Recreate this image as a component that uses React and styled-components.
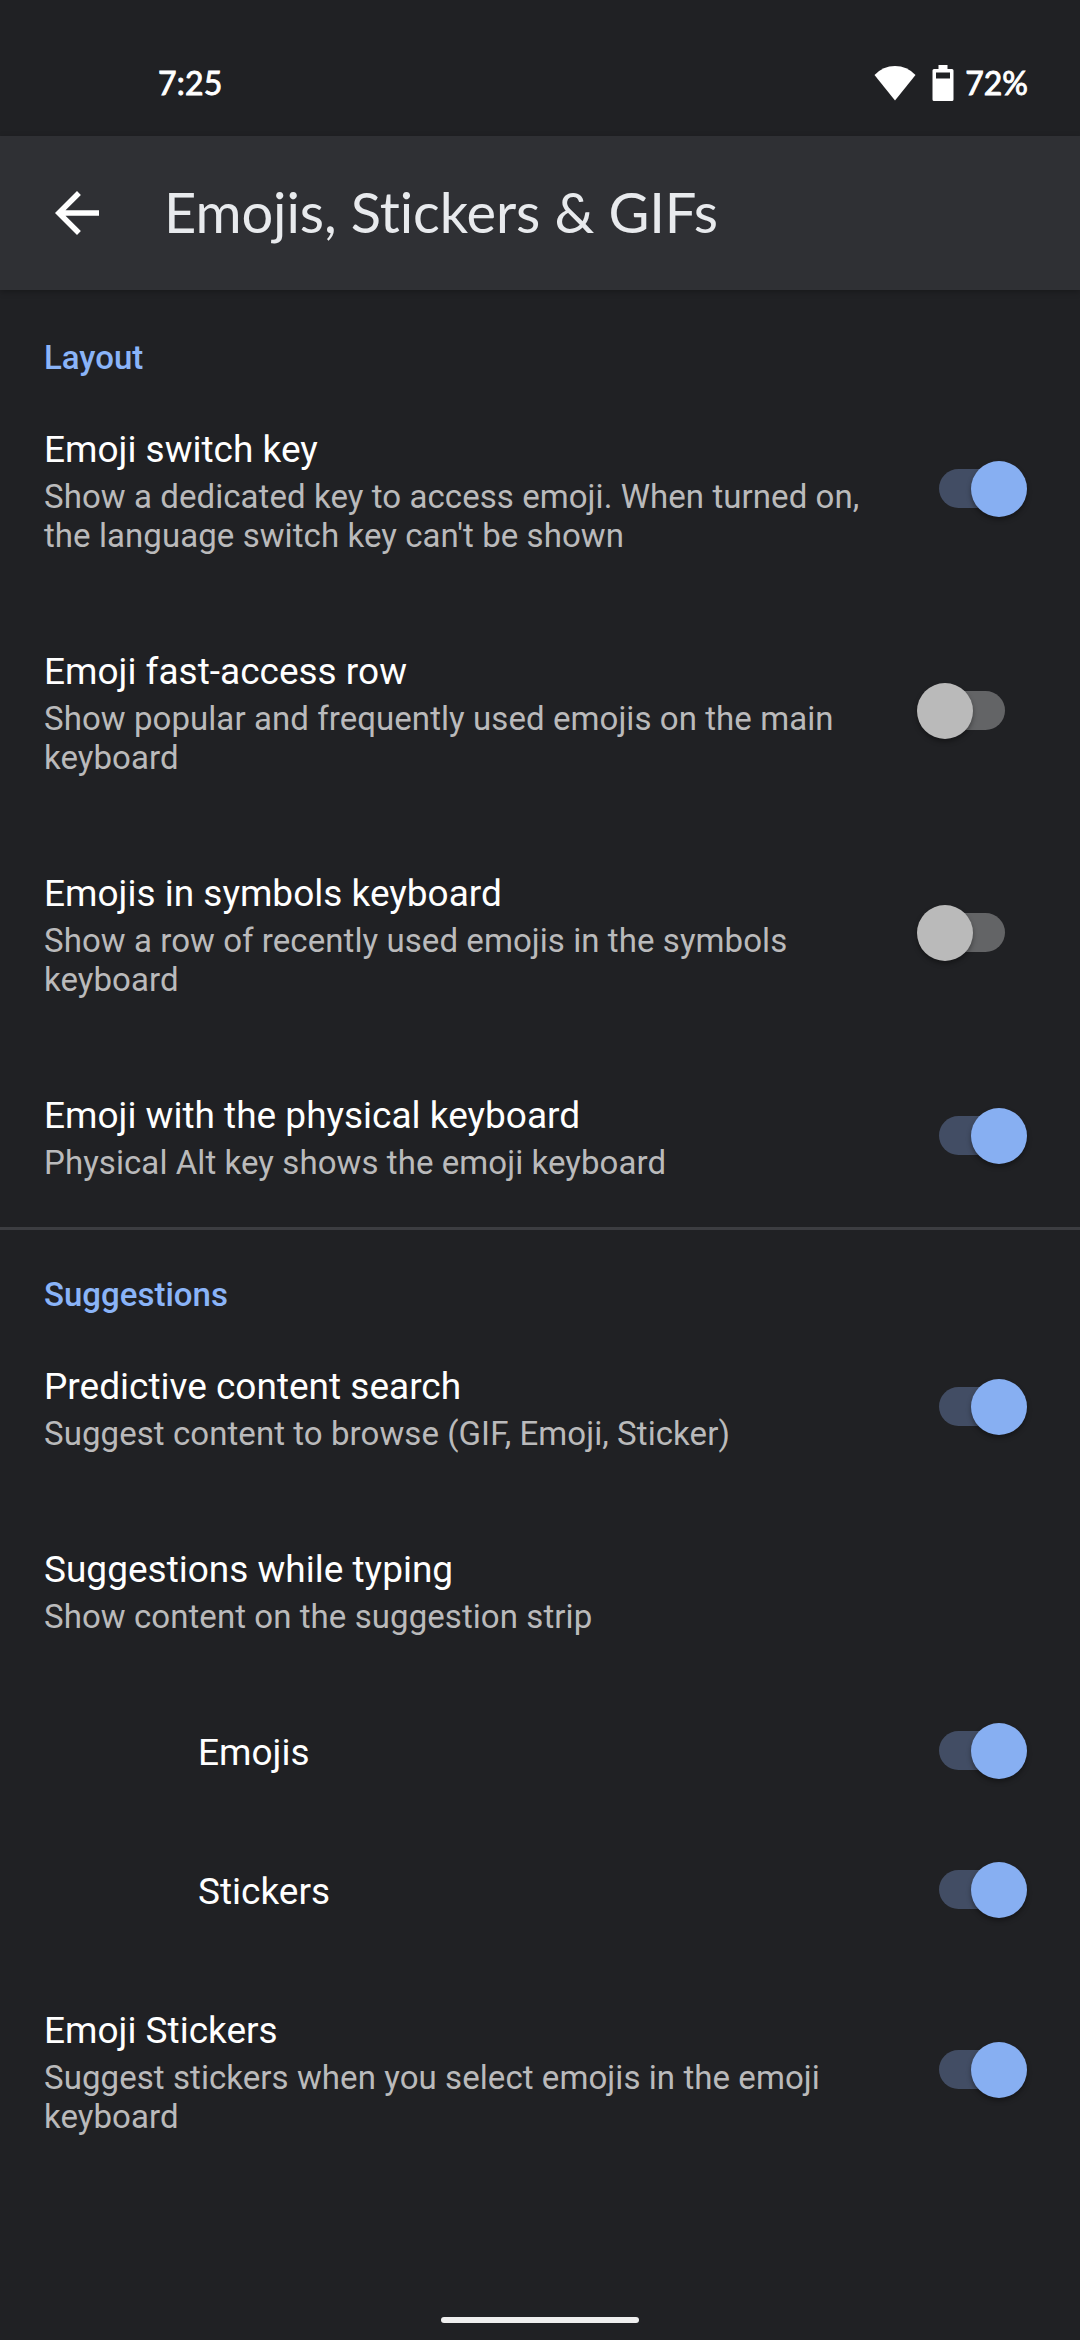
import React, { useState } from "react";
import styled, { createGlobalStyle } from "styled-components";

const GlobalStyle = createGlobalStyle`
  body {
    margin: 0;
    background-color: #202124;
  }

  * {
    box-sizing: border-box;
  }
`;

const Screen = styled.div`
  display: flex;
  flex-direction: column;
  width: 1080px;
  height: 2340px;
  background-color: #202124;
  font-family: "Roboto", sans-serif;
  color: white;
  overflow: hidden;
`;

const StatusBar = styled.div`
  display: flex;
  justify-content: space-between;
  align-items: center;
  height: 136px;
  padding: 30px 52px 0 158px;
  font-family: "Lato", sans-serif;
  font-size: 32px;
  line-height: 38px;
  -webkit-text-stroke: 0.9px white;
`;

const Clock = styled.span`
  letter-spacing: 0.2px;
`;

const StatusIcons = styled.div`
  display: flex;
  align-items: center;
`;

const WifiIcon = styled.svg`
  width: 42px;
  height: 36px;
  margin-right: 16px;
`;

const BatteryIcon = styled.svg`
  width: 22px;
  height: 36px;
  margin-right: 11px;
`;

const AppBar = styled.header`
  display: flex;
  align-items: center;
  flex-shrink: 0;
  height: 154px;
  padding-left: 44px;
  background-color: #2f3034;
  box-shadow: 0 2px 6px rgba(0, 0, 0, 0.25);
`;

const BackButton = styled.button`
  display: flex;
  width: 66px;
  height: 66px;
  margin: 0 54px 0 0;
  padding: 0;
  border: 0;
  background: none;
  cursor: pointer;
`;

const PageTitle = styled.h1`
  margin: 0;
  padding-bottom: 2px;
  font-family: "Lato", sans-serif;
  font-size: 56px;
  font-weight: 400;
  font-variant-ligatures: none;
  line-height: 66px;
  letter-spacing: -0.1px;
  color: #e8eaed;
`;

const Section = styled.section`
  ${({ $divided }) => $divided && "border-top: 3px solid #3c3d41;"}
`;

const SectionTitle = styled.h2`
  height: ${({ $divided }) => ($divided ? 85 : 88)}px;
  margin: 0;
  padding: ${({ $divided }) => ($divided ? 45 : 48)}px 44px 0;
  font-size: 33px;
  font-weight: 500;
  line-height: 39px;
  color: #8ab4f8;
`;

const Row = styled.div`
  display: flex;
  justify-content: space-between;
  align-items: center;
  height: ${({ $lines }) => [139, 183, 222][$lines]}px;
  padding: 0 53px 0 ${({ $indent }) => ($indent ? 198 : 44)}px;
`;

const RowText = styled.div`
  flex: 1;
  padding-top: ${({ $single }) => ($single ? 4 : 2)}px;
`;

const RowTitle = styled.div`
  font-size: 37px;
  line-height: 49px;
`;

const Summary = styled.div`
  margin-top: 3px;
  font-size: 33px;
  line-height: 39px;
  letter-spacing: 0.07px;
  color: #bababb;
  white-space: pre;
`;

const Track = styled.button`
  display: flex;
  flex-shrink: 0;
  align-items: center;
  justify-content: ${({ $on }) => ($on ? "flex-end" : "flex-start")};
  width: 66px;
  height: 39px;
  margin: 0 22px 1px;
  padding: 0;
  border: 0;
  border-radius: 20px;
  background-color: ${({ $on }) => ($on ? "#424d64" : "#636466")};
  cursor: pointer;
`;

const Thumb = styled.span`
  flex-shrink: 0;
  width: 56px;
  height: 56px;
  margin: 1px -22px 0;
  border-radius: 50%;
  background-color: ${({ $on }) => ($on ? "#87aff2" : "#bababa")};
  box-shadow: 0 3px 5px rgba(0, 0, 0, 0.35);
`;

const NavBar = styled.div`
  display: flex;
  justify-content: center;
  margin-top: auto;
  padding-bottom: 17px;
`;

const NavHandle = styled.div`
  width: 198px;
  height: 6px;
  border-radius: 3px;
  background-color: #eeeeee;
`;

const layoutItems = [
	{
		title: "Emoji switch key",
		summary:
			"Show a dedicated key to access emoji. When turned on,\nthe language switch key can't be shown",
		on: true,
	},
	{
		title: "Emoji fast-access row",
		summary: "Show popular and frequently used emojis on the main\nkeyboard",
		on: false,
	},
	{
		title: "Emojis in symbols keyboard",
		summary: "Show a row of recently used emojis in the symbols\nkeyboard",
		on: false,
	},
	{
		title: "Emoji with the physical keyboard",
		summary: "Physical Alt key shows the emoji keyboard",
		on: true,
	},
];

const suggestionItems = [
	{
		title: "Predictive content search",
		summary: "Suggest content to browse (GIF, Emoji, Sticker)",
		on: true,
	},
	{
		title: "Suggestions while typing",
		summary: "Show content on the suggestion strip",
	},
	{ title: "Emojis", indent: true, on: true },
	{ title: "Stickers", indent: true, on: true },
	{
		title: "Emoji Stickers",
		summary: "Suggest stickers when you select emojis in the emoji\nkeyboard",
		on: true,
	},
];

const Toggle = ({ label, defaultOn }) => {
	const [on, setOn] = useState(defaultOn);

	return (
		<Track
			role="switch"
			aria-checked={on}
			aria-label={label}
			$on={on}
			onClick={() => setOn(!on)}
		>
			<Thumb $on={on} />
		</Track>
	);
};

const SettingRow = ({ title, summary, indent, on }) => (
	<Row $lines={summary ? summary.split("\n").length : 0} $indent={indent}>
		<RowText $single={!summary}>
			<RowTitle>{title}</RowTitle>
			{summary && <Summary>{summary}</Summary>}
		</RowText>
		{/* rows without a value have no switch */}
		{on !== undefined && <Toggle label={title} defaultOn={on} />}
	</Row>
);

const App = () => {
	return (
		<>
			<GlobalStyle />
			<Screen>
				<StatusBar>
					<Clock>7:25</Clock>
					<StatusIcons>
						<WifiIcon viewBox="0 0 42 36" fill="white" stroke="none">
							<path d="M21 35.5 L0.5 10 Q9 1 21 1 Q33 1 41.5 10 Z" />
						</WifiIcon>
						<BatteryIcon viewBox="0 0 22 36" fill="white" stroke="none">
							<path
								fillRule="evenodd"
								d="M6.5 0h9v4H20a1.5 1.5 0 0 1 1.5 1.5v29A1.5 1.5 0 0 1 20 36H2a1.5 1.5 0 0 1-1.5-1.5v-29A1.5 1.5 0 0 1 2 4h4.5zM4 7.5v6h14v-6z"
							/>
						</BatteryIcon>
						<span>72%</span>
					</StatusIcons>
				</StatusBar>
				<AppBar>
					<BackButton aria-label="Back">
						<svg width="66" height="66" viewBox="0 0 24 24" fill="white">
							<path d="M20 11H7.83l5.59-5.59L12 4l-8 8 8 8 1.41-1.41L7.83 13H20v-2z" />
						</svg>
					</BackButton>
					<PageTitle>Emojis, Stickers &amp; GIFs</PageTitle>
				</AppBar>
				<Section>
					<SectionTitle>Layout</SectionTitle>
					{layoutItems.map((item) => (
						<SettingRow key={item.title} {...item} />
					))}
				</Section>
				<Section $divided>
					<SectionTitle $divided>Suggestions</SectionTitle>
					{suggestionItems.map((item) => (
						<SettingRow key={item.title} {...item} />
					))}
				</Section>
				<NavBar>
					<NavHandle />
				</NavBar>
			</Screen>
		</>
	);
};

export default App;
